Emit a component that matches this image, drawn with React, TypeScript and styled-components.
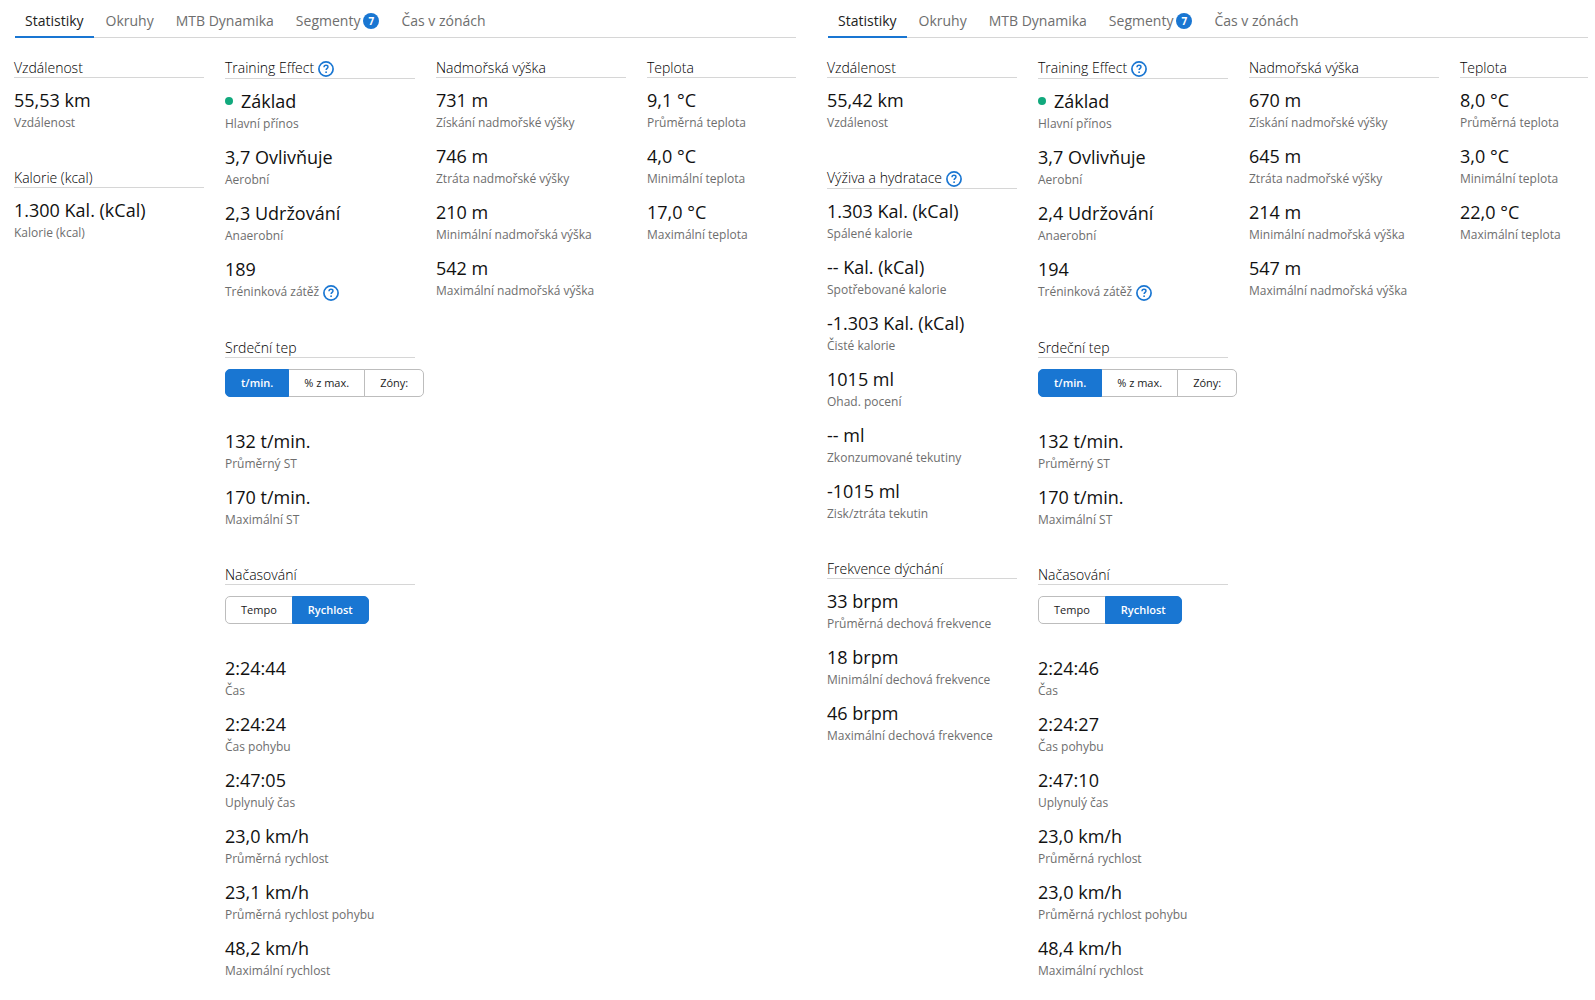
import React, { useState } from "react";
import styled, { createGlobalStyle, css } from "styled-components";

const blue = "#1976d2";
const rule = "#d6d6d6";

const GlobalStyle = createGlobalStyle`
  *, *::before, *::after { box-sizing: border-box; }
  body {
    margin: 0;
    background: #fff;
    color: #111;
    font-family: "Open Sans", "Noto Sans", sans-serif;
  }
`;

const Page = styled.main`
  display: grid;
  grid-template-columns: minmax(0, 782fr) minmax(0, 761fr);
  column-gap: 31px;
  padding: 0 7px 0 14px;
`;

const Panel = styled.section`
  min-width: 0;
`;

const Tabs = styled.nav`
  display: flex;
  gap: 2px;
  height: 38px;
  margin-left: 1px;
  border-bottom: 1px solid ${rule};
`;

const Tab = styled.a<{ $active?: boolean }>`
  display: flex;
  align-items: center;
  gap: 3px;
  height: 38px;
  padding: 6px 10px 0;
  border-bottom: 2px solid transparent;
  color: #6e6e6e;
  font-size: 14px;
  line-height: 20px;
  text-decoration: none;
  white-space: nowrap;
  ${(p) =>
    p.$active &&
    css`
      color: #222;
      border-bottom-color: ${blue};
    `}
`;

const Badge = styled.span`
  width: 16px;
  height: 16px;
  border-radius: 50%;
  background: ${blue};
  color: #fff;
  font-size: 10px;
  font-weight: 700;
  line-height: 16px;
  text-align: center;
`;

const Columns = styled.div<{ $last: number }>`
  display: grid;
  grid-template-columns: repeat(3, minmax(0, 190fr)) minmax(0, ${(p) => p.$last}fr);
  column-gap: 21px;
  padding-top: 21px;
`;

const Column = styled.div`
  display: flex;
  flex-direction: column;
  gap: 37px;
`;

const Heading = styled.h2`
  display: flex;
  gap: 4px;
  margin: 0;
  border-bottom: 1px solid ${rule};
  color: #000;
  font-size: 14px;
  font-weight: 300;
  line-height: 18px;
  white-space: nowrap;
`;

const HelpButton = styled.button`
  display: flex;
  width: 16px;
  height: 19px;
  padding: 2px 0 1px;
  border: 0;
  background: none;
  cursor: pointer;
`;

const Toggle = styled.div`
  display: flex;
  margin: 11px 0 22px;
`;

const ToggleButton = styled.button`
  height: 28px;
  padding: 0 15px 2px;
  border: 1px solid #bdbdbd;
  background: #fff;
  color: #222;
  font-family: inherit;
  font-size: 11px;
  white-space: nowrap;
  cursor: pointer;
  & + & {
    margin-left: -1px;
  }
  &:first-child {
    border-radius: 5px 0 0 5px;
  }
  &:last-child {
    border-radius: 0 5px 5px 0;
  }
  &[aria-pressed="true"] {
    z-index: 1;
    border-color: ${blue};
    background: ${blue};
    color: #fff;
    font-weight: 600;
  }
`;

const Stats = styled.dl`
  display: flex;
  flex-direction: column;
  gap: 12px;
  margin: 0;
  padding-top: 10px;
`;

const Stat = styled.div`
  display: flex;
  flex-direction: column-reverse;
  gap: 2px;
`;

const Value = styled.dd`
  display: flex;
  align-items: center;
  gap: 8px;
  margin: 0;
  font-size: 18px;
  line-height: 24px;
  white-space: nowrap;
`;

const Label = styled.dt`
  display: flex;
  gap: 4px;
  color: #6e6e6e;
  font-size: 12px;
  line-height: 18px;
  white-space: nowrap;
`;

const Dot = styled.span`
  width: 8px;
  height: 8px;
  border-radius: 50%;
  background: #11a97d;
`;

function Help({ topic }: { topic: string }) {
  return (
    <HelpButton type="button" aria-label={topic}>
      <svg width="16" height="16" viewBox="0 0 16 16" fill="none" stroke={blue}>
        <circle cx="8" cy="8" r="7.1" strokeWidth="1.7" />
        <path d="M6 6.2C6 5 6.8 4.3 8 4.3s2 .7 2 1.7c0 1.3-1.9 1.5-1.9 3.1" strokeWidth="1.4" />
        <circle cx="8.1" cy="11.2" r="0.9" fill={blue} stroke="none" />
      </svg>
    </HelpButton>
  );
}

type Item = { value: string; label: string; dot?: boolean; help?: boolean };
type Group = { title: string; help?: boolean; options?: string[]; selected?: number; items: Item[] };
type Activity = { name: string; last: number; columns: Group[][] };

const list = (...pairs: [string, string][]): Item[] => pairs.map(([value, label]) => ({ value, label }));

const training = (anaerobic: string, load: string): Group => ({
  title: "Training Effect",
  help: true,
  items: [
    { value: "Základ", label: "Hlavní přínos", dot: true },
    { value: "3,7 Ovlivňuje", label: "Aerobní" },
    { value: anaerobic, label: "Anaerobní" },
    { value: load, label: "Tréninková zátěž", help: true },
  ],
});

const heartRate = (): Group => ({
  title: "Srdeční tep",
  options: ["t/min.", "% z max.", "Zóny:"],
  selected: 0,
  items: list(["132 t/min.", "Průměrný ST"], ["170 t/min.", "Maximální ST"]),
});

const timing = (t: string[]): Group => ({
  title: "Načasování",
  options: ["Tempo", "Rychlost"],
  selected: 1,
  items: list(
    [t[0], "Čas"],
    [t[1], "Čas pohybu"],
    [t[2], "Uplynulý čas"],
    [t[3], "Průměrná rychlost"],
    [t[4], "Průměrná rychlost pohybu"],
    [t[5], "Maximální rychlost"],
  ),
});

const elevation = (v: string[]): Group => ({
  title: "Nadmořská výška",
  items: list(
    [v[0], "Získání nadmořské výšky"],
    [v[1], "Ztráta nadmořské výšky"],
    [v[2], "Minimální nadmořská výška"],
    [v[3], "Maximální nadmořská výška"],
  ),
});

const temperature = (v: string[]): Group => ({
  title: "Teplota",
  items: list([v[0], "Průměrná teplota"], [v[1], "Minimální teplota"], [v[2], "Maximální teplota"]),
});

const activities: Activity[] = [
  {
    name: "a",
    last: 149,
    columns: [
      [
        { title: "Vzdálenost", items: list(["55,53 km", "Vzdálenost"]) },
        { title: "Kalorie (kcal)", items: list(["1.300 Kal. (kCal)", "Kalorie (kcal)"]) },
      ],
      [
        training("2,3 Udržování", "189"),
        heartRate(),
        timing(["2:24:44", "2:24:24", "2:47:05", "23,0 km/h", "23,1 km/h", "48,2 km/h"]),
      ],
      [elevation(["731 m", "746 m", "210 m", "542 m"])],
      [temperature(["9,1 °C", "4,0 °C", "17,0 °C"])],
    ],
  },
  {
    name: "b",
    last: 128,
    columns: [
      [
        { title: "Vzdálenost", items: list(["55,42 km", "Vzdálenost"]) },
        {
          title: "Výživa a hydratace",
          help: true,
          items: list(
            ["1.303 Kal. (kCal)", "Spálené kalorie"],
            ["-- Kal. (kCal)", "Spotřebované kalorie"],
            ["-1.303 Kal. (kCal)", "Čisté kalorie"],
            ["1015 ml", "Ohad. pocení"],
            ["-- ml", "Zkonzumované tekutiny"],
            ["-1015 ml", "Zisk/ztráta tekutin"],
          ),
        },
        {
          title: "Frekvence dýchání",
          items: list(
            ["33 brpm", "Průměrná dechová frekvence"],
            ["18 brpm", "Minimální dechová frekvence"],
            ["46 brpm", "Maximální dechová frekvence"],
          ),
        },
      ],
      [
        training("2,4 Udržování", "194"),
        heartRate(),
        timing(["2:24:46", "2:24:27", "2:47:10", "23,0 km/h", "23,0 km/h", "48,4 km/h"]),
      ],
      [elevation(["670 m", "645 m", "214 m", "547 m"])],
      [temperature(["8,0 °C", "3,0 °C", "22,0 °C"])],
    ],
  },
];

const tabs = ["Statistiky", "Okruhy", "MTB Dynamika", "Segmenty", "Čas v zónách"];

function StatGroup({ group }: { group: Group }) {
  const [selected, setSelected] = useState(group.selected);
  return (
    <section>
      <Heading>
        {group.title}
        {group.help && <Help topic={group.title} />}
      </Heading>
      {group.options && (
        <Toggle role="group" aria-label={group.title}>
          {group.options.map((option, i) => (
            <ToggleButton key={option} type="button" aria-pressed={i === selected} onClick={() => setSelected(i)}>
              {option}
            </ToggleButton>
          ))}
        </Toggle>
      )}
      <Stats>
        {group.items.map((item) => (
          <Stat key={item.label}>
            <Label>
              {item.label}
              {item.help && <Help topic={item.label} />}
            </Label>
            <Value>
              {item.dot && <Dot />}
              {item.value}
            </Value>
          </Stat>
        ))}
      </Stats>
    </section>
  );
}

function ActivityPanel({ activity }: { activity: Activity }) {
  const [active, setActive] = useState(0);
  return (
    <Panel>
      <Tabs>
        {tabs.map((tab, i) => (
          <Tab key={tab} href={`#${activity.name}-${i}`} $active={i === active} onClick={() => setActive(i)}>
            {tab}
            {tab === "Segmenty" && <Badge>7</Badge>}
          </Tab>
        ))}
      </Tabs>
      <Columns $last={activity.last}>
        {activity.columns.map((groups, i) => (
          <Column key={i}>
            {groups.map((group) => (
              <StatGroup key={group.title} group={group} />
            ))}
          </Column>
        ))}
      </Columns>
    </Panel>
  );
}

export default function App() {
  return (
    <>
      <GlobalStyle />
      <Page>
        {activities.map((activity) => (
          <ActivityPanel key={activity.name} activity={activity} />
        ))}
      </Page>
    </>
  );
}
